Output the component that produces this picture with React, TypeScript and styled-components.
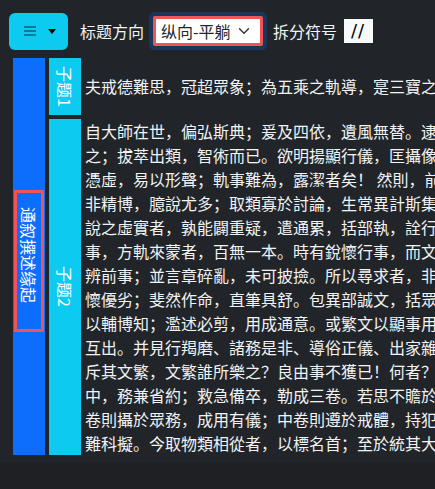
import { FC } from 'react';
import styled, { createGlobalStyle } from 'styled-components';

const GlobalStyle = createGlobalStyle`
  html, body {
    margin: 0;
    padding: 0;
    background: #1f2023;
    overflow: hidden;
  }
  body {
    font-family: "Noto Sans CJK SC", "Noto Sans CJK TC", "Noto Sans", sans-serif;
    color: #f1f3f5;
  }
`;

const sectionOne = ['夫戒德難思，冠超眾象；為五乘之軌導，寔三寶之舟航。'];

const sectionTwo = [
  '自大師在世，偏弘斯典；爰及四依，遺風無替。逮于像季，',
  '之；拔萃出類，智術而已。欲明揚顯行儀，匡攝像末，',
  '憑虛，易以形聲；軌事難為，露潔者矣！ 然則，前代所',
  '非精博，臆說尤多；取類寡於討論，生常異計斯集。',
  '說之虛實者，孰能闢重疑，遣通累，括部執，詮行相，',
  '事，方軌來蒙者，百無一本。時有銳懷行事，而文多雜，',
  '辨前事；並言章碎亂，未可披撿。所以尋求者，非一途。',
  '懷優劣；斐然作命，直筆具舒。包異部誠文，括眾經隨說，',
  '以輔博知；濫述必剪，用成通意。或繁文以顯事用，',
  '互出。并見行羯磨、諸務是非、導俗正儀、出家雜法，',
  '斥其文繁，文繁誰所樂之？良由事不獲已！何者？',
  '中，務兼省約；救急備卒，勒成三卷。若思不贍於',
  '卷則攝於眾務，成用有儀；中卷則遵於戒體，持犯',
  '難科擬。今取物類相從者，以標名首；至於統其大',
];

const App: FC = () => {
  return (
    <>
      <GlobalStyle />
      <Page>
        <Toolbar>
          <MenuButton type="button">
            <svg width="12" height="10" viewBox="0 0 12 10">
              <rect x="0" y="0" width="12" height="2" fill="#0a7c94" />
              <rect x="0" y="4" width="12" height="2" fill="#0a7c94" />
              <rect x="0" y="8" width="12" height="2" fill="#0a7c94" />
            </svg>
            <Caret />
          </MenuButton>
          <ToolLabel>标题方向</ToolLabel>
          <SelectBox>
            <span>纵向-平躺</span>
            <svg width="12" height="12" viewBox="0 0 16 16">
              <path
                d="m2 5 6 6 6-6"
                fill="none"
                stroke="#343a40"
                strokeWidth="2"
                strokeLinecap="round"
                strokeLinejoin="round"
              />
            </svg>
          </SelectBox>
          <ToolLabel $gap={10}>拆分符号</ToolLabel>
          <SplitInput>//</SplitInput>
        </Toolbar>

        <Board>
          <TitleColumn>
            <TitleBox>通叙撰述缘起</TitleBox>
          </TitleColumn>
          <Sections>
            <Section>
              <SubLabel>
                <span>子题1</span>
              </SubLabel>
              <Body>
                {sectionOne.map((line, i) => (
                  <Line key={i}>{line}</Line>
                ))}
              </Body>
            </Section>
            <Section>
              <SubLabel>
                <span>子题2</span>
              </SubLabel>
              <Body>
                {sectionTwo.map((line, i) => (
                  <Line key={i}>{line}</Line>
                ))}
              </Body>
            </Section>
          </Sections>
        </Board>
      </Page>
    </>
  );
};

const Page = styled.div`
  background: #212529;
  padding: 12px 0 8px 9px;
  width: 100%;
  box-sizing: border-box;
`;

const Toolbar = styled.div`
  display: flex;
  align-items: center;
  height: 38px;
`;

const MenuButton = styled.button`
  display: flex;
  align-items: center;
  gap: 12px;
  height: 37px;
  width: 59px;
  padding: 0 0 0 15px;
  border: none;
  border-radius: 6px;
  background: #0dcaf0;
  cursor: pointer;
`;

const Caret = styled.span`
  width: 0;
  height: 0;
  border-top: 5px solid #000;
  border-left: 4px solid transparent;
  border-right: 4px solid transparent;
`;

const ToolLabel = styled.span<{ $gap?: number }>`
  margin-left: ${(p) => p.$gap ?? 12}px;
  font-size: 16px;
  line-height: 24px;
  color: #f1f3f5;
  white-space: nowrap;
`;

const SelectBox = styled.div`
  display: flex;
  align-items: center;
  justify-content: space-between;
  box-sizing: border-box;
  margin-left: 9px;
  width: 110px;
  height: 30px;
  padding: 0 10px 0 5px;
  background: #fff;
  border: 3px solid #f05454;
  box-shadow: 0 0 0 4px #1a365a;
  border-radius: 2px;
  color: #212529;
  font-size: 16px;
  white-space: nowrap;
`;

const SplitInput = styled.div`
  margin-left: 7px;
  box-sizing: border-box;
  width: 29px;
  height: 24px;
  padding-left: 7px;
  background: #f8f9fa;
  color: #000;
  font-family: "DejaVu Sans", "Liberation Sans", sans-serif;
  font-size: 18px;
  line-height: 24px;
  letter-spacing: 1px;
`;

const Board = styled.div`
  display: flex;
  gap: 4px;
  margin: 8px 0 0 4px;
`;

const TitleColumn = styled.div`
  display: flex;
  align-items: center;
  justify-content: center;
  width: 32px;
  flex-shrink: 0;
  background: #0d6efd;
`;

const TitleBox = styled.div`
  box-sizing: border-box;
  width: 30px;
  margin-top: 10px;
  padding: 14px 0 26px;
  border: 3px solid #f05454;
  writing-mode: vertical-rl;
  text-orientation: sideways;
  font-size: 16px;
  line-height: 24px;
  color: #fff;
`;

const Sections = styled.div`
  display: flex;
  flex-direction: column;
  gap: 4px;
  min-width: 0;
`;

const Section = styled.div`
  display: flex;
  gap: 4px;
`;

const SubLabel = styled.div`
  display: flex;
  align-items: center;
  justify-content: center;
  width: 32px;
  flex-shrink: 0;
  background: #0dcaf0;
  color: #fff;

  span {
    writing-mode: vertical-rl;
    text-orientation: sideways;
    padding: 8px 0;
    font-size: 16px;
    line-height: 24px;
  }
`;

const Body = styled.div`
  align-self: center;
  font-size: 16px;
  line-height: 24px;
  color: #f1f3f5;
`;

const Line = styled.div`
  white-space: nowrap;
`;

export default App;
